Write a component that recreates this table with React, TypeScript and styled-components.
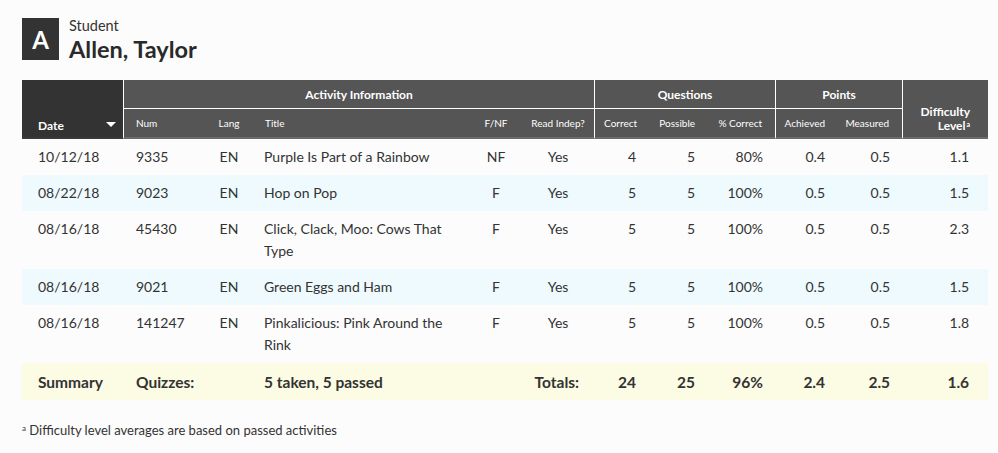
import React from "react";
import styled, { createGlobalStyle } from "styled-components";

const Global = createGlobalStyle`
  html, body { margin: 0; padding: 0; background: #fcfcfc; }
  body { font-family: "Lato", "Liberation Sans", sans-serif; color: #333; }
`;

const Page = styled.div`
  padding: 18px 10px 0 22px;
  width: 966px;
`;

const StudentHeader = styled.div`
  display: flex;
  align-items: flex-start;
  gap: 10px;
`;

const Badge = styled.div`
  width: 37px;
  height: 42px;
  background: #333;
  color: #fff;
  font-weight: 700;
  font-size: 24px;
  display: flex;
  align-items: center;
  justify-content: center;
`;

const NameBlock = styled.div`
  display: flex;
  flex-direction: column;
  margin-top: -1px;
`;

const Label = styled.div`
  font-size: 14.5px;
  line-height: 18px;
  color: #333;
`;

const Name = styled.div`
  font-size: 23.5px;
  font-weight: 700;
  line-height: 28px;
  color: #2a2a2a;
`;

const Table = styled.table`
  margin-top: 17px;
  width: 966px;
  table-layout: fixed;
  border-collapse: separate;
  border-spacing: 0;
  font-size: 14px;
`;

const GroupTh = styled.th`
  background: #555;
  color: #fff;
  font-size: 12px;
  font-weight: 700;
  height: 28px;
  padding: 0;
  text-align: center;
  border-left: 1px solid #fff;
  border-bottom: 1px solid #fff;
`;

const DateTh = styled.th`
  background: #333;
  color: #fff;
  font-size: 12px;
  font-weight: 700;
  padding: 0 7px 4px 16px;
  vertical-align: bottom;
  text-align: left;
  border-bottom: 2px solid #3a3a3a;
`;

const DateInner = styled.div`
  display: flex;
  align-items: center;
  justify-content: space-between;
`;

const Caret = styled.span`
  width: 0;
  height: 0;
  margin-top: -3px;
  border-left: 5px solid transparent;
  border-right: 5px solid transparent;
  border-top: 5px solid #fff;
`;

const SubTh = styled.th<{ $align: "left" | "center" | "right"; $edge?: boolean }>`
  background: #555;
  color: #fff;
  font-size: 10px;
  font-weight: 400;
  height: 28px;
  padding: ${(p) => (p.$align === "left" ? "0 0 0 12px" : p.$align === "right" ? "0 13px 0 0" : "0")};
  text-align: ${(p) => p.$align};
  border-left: ${(p) => (p.$edge ? "1px solid #fff" : "none")};
  border-bottom: 2px solid #6b6b6b;
  white-space: nowrap;
`;

const DiffTh = styled.th`
  background: #555;
  color: #fff;
  font-size: 12px;
  font-weight: 700;
  line-height: 14px;
  padding: 0 18px 4px 0;
  text-align: right;
  vertical-align: bottom;
  border-left: 1px solid #fff;
  border-bottom: 2px solid #6b6b6b;
`;

const HeadLine = styled.div`
  white-space: nowrap;
`;

const HeadSup = styled.span`
  display: inline-block;
  font-size: 7px;
  line-height: 7px;
  vertical-align: top;
  margin-left: 1px;
  margin-top: 2px;
`;

const FootSup = styled.span`
  display: inline-block;
  font-size: 8px;
  line-height: 8px;
  vertical-align: top;
  margin-top: 2px;
`;

const Row = styled.tr<{ $alt?: boolean }>`
  background: ${(p) => (p.$alt ? "#eefafd" : "transparent")};
`;

const SummaryRow = styled.tr`
  background: #fcfce4;
  td {
    font-size: 15.5px;
    padding-top: 8px;
    padding-bottom: 7px;
  }
`;

const Td = styled.td<{ $align: "left" | "center" | "right"; $pl?: number; $pr?: number; $bold?: boolean }>`
  padding: 7px ${(p) => p.$pr ?? 0}px 7px ${(p) => p.$pl ?? 0}px;
  line-height: 22px;
  vertical-align: top;
  text-align: ${(p) => p.$align};
  font-weight: ${(p) => (p.$bold ? 700 : 400)};
  color: #333;
`;

const Footnote = styled.p`
  margin: 22px 0 0 0;
  font-size: 13px;
  line-height: 16px;
  color: #333;
`;

type R = {
  date: string; num: string; title: string; fnf: string;
  correct: number; possible: number; pct: string; ach: string; meas: string; diff: string;
};

const rows: R[] = [
  { date: "10/12/18", num: "9335", title: "Purple Is Part of a Rainbow", fnf: "NF", correct: 4, possible: 5, pct: "80%", ach: "0.4", meas: "0.5", diff: "1.1" },
  { date: "08/22/18", num: "9023", title: "Hop on Pop", fnf: "F", correct: 5, possible: 5, pct: "100%", ach: "0.5", meas: "0.5", diff: "1.5" },
  { date: "08/16/18", num: "45430", title: "Click, Clack, Moo: Cows That Type", fnf: "F", correct: 5, possible: 5, pct: "100%", ach: "0.5", meas: "0.5", diff: "2.3" },
  { date: "08/16/18", num: "9021", title: "Green Eggs and Ham", fnf: "F", correct: 5, possible: 5, pct: "100%", ach: "0.5", meas: "0.5", diff: "1.5" },
  { date: "08/16/18", num: "141247", title: "Pinkalicious: Pink Around the Rink", fnf: "F", correct: 5, possible: 5, pct: "100%", ach: "0.5", meas: "0.5", diff: "1.8" },
];

export default function App() {
  return (
    <Page>
      <Global />
      <StudentHeader>
        <Badge>A</Badge>
        <NameBlock>
          <Label>Student</Label>
          <Name>Allen, Taylor</Name>
        </NameBlock>
      </StudentHeader>
      <Table>
        <colgroup>
          <col style={{ width: 101 }} />
          <col style={{ width: 82 }} />
          <col style={{ width: 48 }} />
          <col style={{ width: 217 }} />
          <col style={{ width: 52 }} />
          <col style={{ width: 72 }} />
          <col style={{ width: 56 }} />
          <col style={{ width: 58 }} />
          <col style={{ width: 67 }} />
          <col style={{ width: 63 }} />
          <col style={{ width: 64 }} />
          <col style={{ width: 86 }} />
        </colgroup>
        <thead>
          <tr>
            <DateTh rowSpan={2}>
              <DateInner>
                <span>Date</span>
                <Caret />
              </DateInner>
            </DateTh>
            <GroupTh colSpan={5}>Activity Information</GroupTh>
            <GroupTh colSpan={3}>Questions</GroupTh>
            <GroupTh colSpan={2}>Points</GroupTh>
            <DiffTh rowSpan={2}>
              <HeadLine>Difficulty</HeadLine>
              <HeadLine>
                Level<HeadSup>a</HeadSup>
              </HeadLine>
            </DiffTh>
          </tr>
          <tr>
            <SubTh $align="left" $edge>Num</SubTh>
            <SubTh $align="center">Lang</SubTh>
            <SubTh $align="left">Title</SubTh>
            <SubTh $align="center">F/NF</SubTh>
            <SubTh $align="center">Read Indep?</SubTh>
            <SubTh $align="right" $edge>Correct</SubTh>
            <SubTh $align="right">Possible</SubTh>
            <SubTh $align="right">% Correct</SubTh>
            <SubTh $align="right" $edge>Achieved</SubTh>
            <SubTh $align="right">Measured</SubTh>
          </tr>
        </thead>
        <tbody>
          {rows.map((r, i) => (
            <Row key={i} $alt={i % 2 === 1}>
              <Td $align="left" $pl={16}>{r.date}</Td>
              <Td $align="left" $pl={13}>{r.num}</Td>
              <Td $align="center">EN</Td>
              <Td $align="left" $pl={11} $pr={14}>{r.title}</Td>
              <Td $align="center">{r.fnf}</Td>
              <Td $align="center">Yes</Td>
              <Td $align="right" $pr={14}>{r.correct}</Td>
              <Td $align="right" $pr={13}>{r.possible}</Td>
              <Td $align="right" $pr={12}>{r.pct}</Td>
              <Td $align="right" $pr={13}>{r.ach}</Td>
              <Td $align="right" $pr={12}>{r.meas}</Td>
              <Td $align="right" $pr={19}>{r.diff}</Td>
            </Row>
          ))}
          <SummaryRow>
            <Td $align="left" $pl={16} $bold>Summary</Td>
            <Td $align="left" $pl={13} $bold colSpan={2}>Quizzes:</Td>
            <Td $align="left" $pl={11} $bold>5 taken, 5 passed</Td>
            <Td $align="right" $pr={15} $bold colSpan={2}>Totals:</Td>
            <Td $align="right" $pr={14} $bold>24</Td>
            <Td $align="right" $pr={13} $bold>25</Td>
            <Td $align="right" $pr={12} $bold>96%</Td>
            <Td $align="right" $pr={13} $bold>2.4</Td>
            <Td $align="right" $pr={12} $bold>2.5</Td>
            <Td $align="right" $pr={19} $bold>1.6</Td>
          </SummaryRow>
        </tbody>
      </Table>
      <Footnote>
        <FootSup>a</FootSup> Difficulty level averages are based on passed activities
      </Footnote>
    </Page>
  );
}
